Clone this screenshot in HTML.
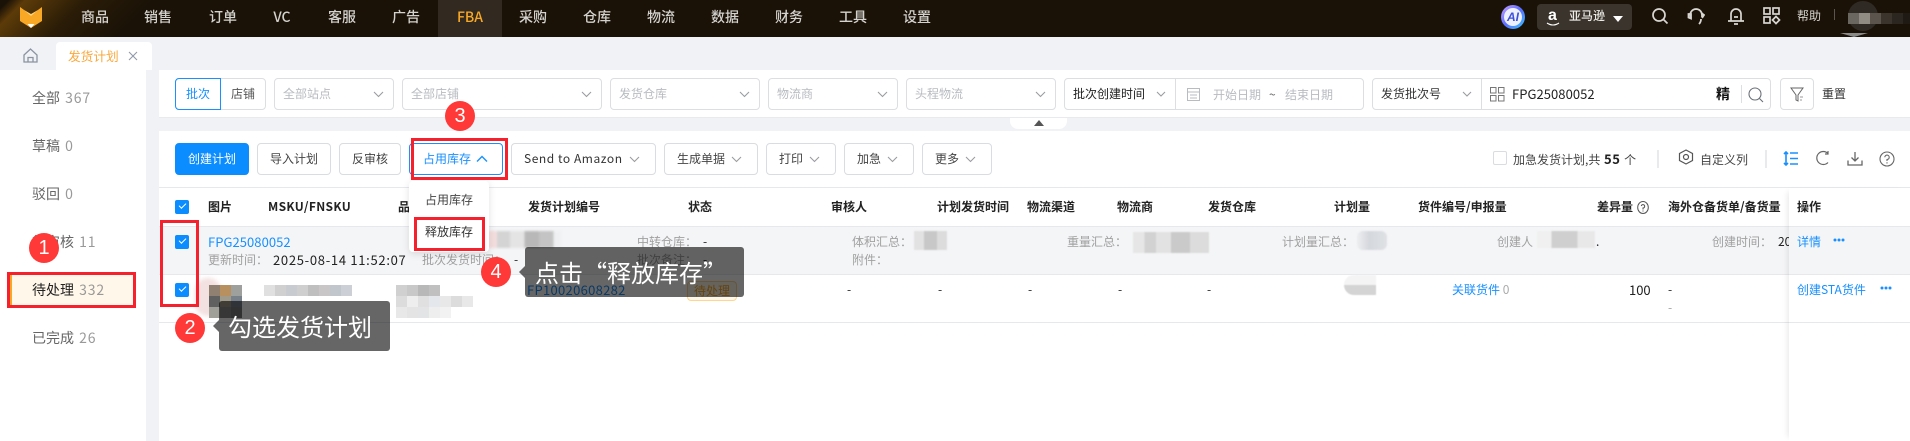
<!DOCTYPE html>
<html lang="zh"><head><meta charset="utf-8"><title>发货计划</title>
<style>
html,body{margin:0;padding:0}
body{width:1910px;height:441px;overflow:hidden;position:relative;background:#f0f2f6;font-family:"Noto Sans CJK SC","Liberation Sans",sans-serif;font-size:12px;color:#333}
div,span,svg{box-sizing:border-box}
.a{position:absolute}
.t{position:absolute;white-space:nowrap;line-height:20px;height:20px}
.nav{color:#d4d2ce;font-size:14px;font-weight:500;transform:translateX(-50%);top:7px}
.box{position:absolute;top:78px;height:32px;border:1px solid #dcdee2;border-radius:4px;background:#fff}
.ph{color:#b8bbc0;top:84px}
.btn{position:absolute;top:143px;height:32px;border:1px solid #d9dce0;border-radius:4px;background:#fff}
.bt{top:149px;color:#444}
.th{top:197px;font-weight:700;color:#222}
.g{color:#a0a0a0}
.l{color:#1890ff}
.d{color:#222}
.n{color:#999;margin-left:2px;letter-spacing:.85px}
.cb{position:absolute;left:175px;width:14px;height:14px;background:#0b8cff;border-radius:2px}
.cb:after{content:"";position:absolute;left:4px;top:3px;width:6px;height:3px;border-left:1.4px solid #fff;border-bottom:1.4px solid #fff;transform:rotate(-45deg)}
.red{position:absolute;border:3px solid #f5222d;z-index:5}
.num{position:absolute;width:30px;height:30px;border-radius:50%;background:#ff3838;color:#fff;font-size:20px;line-height:30px;text-align:center;z-index:7;font-family:"Liberation Sans",sans-serif}
.tip{position:absolute;background:rgba(0,0,0,.6);border-radius:3px;color:#fff;font-size:24px;line-height:50px;height:50px;white-space:nowrap;z-index:6}
.tip:before{content:"";position:absolute;left:-6px;top:19px;border:6px solid transparent;border-left:0;border-right-color:rgba(0,0,0,.6)}
.chev{position:absolute;fill:none;stroke:#9a9ca0;stroke-width:1.1}
.m{position:absolute;display:flex;flex-wrap:wrap;filter:blur(.3px)}
.m i{display:block;width:11px;height:11px}
</style></head><body>

<!-- top nav -->
<div class="a" style="left:0;top:0;width:1910px;height:37px;background:linear-gradient(135deg,#1a1207 0,#1a1207 6px,#5c3b08 18px,#2a1c07 60px,#1a1207 110px,#1a1207 100%)"></div>
<div class="a" style="left:438px;top:0;width:64px;height:37px;background:#322a20"></div>
<svg class="a" style="left:20px;top:7px" width="22" height="22" viewBox="0 0 22 22"><path d="M0 0L11 8 22 0V14L11 21 0 14Z" fill="#f9a825"/><path d="M4 3L11 9 18 3 11 7Z" fill="#ffd47a"/><path d="M7.500 17H14.500L11 21Z" fill="#fff"/></svg>
<span class="t nav" style="left:95px">商品</span><span class="t nav" style="left:158px">销售</span><span class="t nav" style="left:223px">订单</span><span class="t nav" style="left:282px">VC</span><span class="t nav" style="left:342px">客服</span><span class="t nav" style="left:406px">广告</span><span class="t nav" style="left:470px;color:#f9a825">FBA</span><span class="t nav" style="left:533px">采购</span><span class="t nav" style="left:597px">仓库</span><span class="t nav" style="left:661px">物流</span><span class="t nav" style="left:725px">数据</span><span class="t nav" style="left:789px">财务</span><span class="t nav" style="left:853px">工具</span><span class="t nav" style="left:917px">设置</span>

<div class="a" style="left:1501px;top:5px;width:24px;height:24px;border-radius:50%;background:linear-gradient(135deg,#c9a0ff,#5a6cff 50%,#39c8ff);padding:3px"><div style="width:18px;height:18px;border-radius:50%;background:#eef0ff;color:#3d4fd8;font:italic bold 12px/18px 'Liberation Sans',sans-serif;text-align:center">AI</div></div>
<div class="a" style="left:1537px;top:4px;width:95px;height:26px;background:#3a342c;border-radius:4px"></div>
<span class="t" style="left:1548px;top:6px;color:#fff;font:bold 16px/20px 'Liberation Sans',sans-serif">a</span>
<svg class="a" style="left:1546px;top:22px" width="15" height="5"><path d="M1 1Q7 5 13 1" fill="none" stroke="#fff" stroke-width="1.1"/></svg>
<span class="t" style="left:1569px;top:6px;color:#eeece8;font-weight:500">亚马逊</span>
<svg class="a" style="left:1613px;top:15px" width="10" height="8"><path d="M0 1H10L5 7Z" fill="#fff"/></svg>
<svg class="a" style="left:1651px;top:7px" width="18" height="18" fill="none" stroke="#d8d6d2" stroke-width="1.7"><circle cx="8" cy="8" r="6"/><path d="M12.500 12.500L16.500 16.500"/></svg>
<svg class="a" style="left:1687px;top:7px" width="18" height="19" fill="none" stroke="#d8d6d2" stroke-width="1.8"><path d="M4 11A6 6 0 0 1 9 2 6 6 0 0 1 15 8V10"/><path d="M1.500 7V10.500L4 11.500V7ZM15 6.500L17 8 15 11"/><path d="M12 17Q14 15 14 12"/></svg>
<svg class="a" style="left:1727px;top:7px" width="18" height="18" fill="none" stroke="#d8d6d2" stroke-width="1.7"><path d="M1 14H17M4 14V7A5 5 0 0 1 14 7V14M7 10H11M7 17H11"/></svg>
<svg class="a" style="left:1763px;top:7px" width="18" height="18" fill="none" stroke="#d8d6d2" stroke-width="1.7"><rect x="1" y="1" width="6" height="6"/><rect x="10" y="1" width="6" height="6"/><rect x="1" y="10" width="6" height="6"/><path d="M13 9.500L16.500 13 13 16.500 9.500 13Z"/></svg>
<span class="t" style="left:1797px;top:6px;color:#d4d2ce">帮助</span>
<div class="a" style="left:1834px;top:9px;width:1px;height:11px;background:#5a554d"></div>
<div class="a" style="left:1848px;top:1px;width:30px;height:30px;border-radius:50%;background:#2f2a24"></div>
<div class="m" style="left:1848px;top:13px;width:66px"><i style="background:#6a6660"></i><i style="background:#908c84"></i><i style="background:#5a544c"></i><i style="background:#3a342c"></i><i style="background:#2c2620"></i><i style="background:#1f1a14"></i></div>
<div class="a" style="left:1840px;top:33px;width:0;height:0;border:14px solid transparent;border-top:4px solid #8a8a88;border-bottom:0"></div>

<!-- tabs -->
<svg class="a" style="left:23px;top:48px" width="15" height="15" fill="none" stroke="#8a94a0" stroke-width="1.3"><path d="M1 7L7.500 1 14 7V14H1ZM5 14V9.500H10V14"/></svg>
<div class="a" style="left:56px;top:42px;width:96px;height:28px;background:#fff;border-radius:4px 4px 0 0"></div>
<span class="t" style="left:68px;top:46px;font-size:12.7px;color:#f9a83c">发货计划</span>
<svg class="a" style="left:128px;top:51px" width="10" height="10" stroke="#8f9aa8" stroke-width="1.1"><path d="M1 1L9 9M9 1L1 9"/></svg>

<!-- sidebar -->
<div class="a" style="left:0;top:70px;width:146px;height:371px;background:#fff"></div>
<div class="a" style="left:9px;top:272px;width:126px;height:36px;background:#fff7ea;border-left:3px solid #f9a825"></div>
<span class="t" style="left:32px;top:88px;font-size:14px;color:#666">全部 <span class="n">367</span></span>
<span class="t" style="left:32px;top:136px;font-size:14px;color:#666">草稿 <span class="n">0</span></span>
<span class="t" style="left:32px;top:184px;font-size:14px;color:#666">驳回 <span class="n">0</span></span>
<span class="t" style="left:32px;top:232px;font-size:14px;color:#666">待审核 <span class="n">11</span></span>
<span class="t" style="left:32px;top:280px;font-size:14px;color:#222">待处理 <span class="n">332</span></span>
<span class="t" style="left:32px;top:328px;font-size:14px;color:#666">已完成 <span class="n">26</span></span>

<!-- filter panel -->
<div class="a" style="left:159px;top:70px;width:1751px;height:48px;background:#fff;border-bottom:1px solid #e8eaee"></div>
<div class="box" style="left:175px;width:91px"></div>
<div class="a" style="left:175px;top:78px;width:46px;height:32px;border:1px solid #1890ff;border-radius:4px 0 0 4px"></div>
<span class="t l" style="left:186px;top:84px">批次</span><span class="t" style="left:231px;top:84px;color:#555">店铺</span>
<div class="box" style="left:274px;width:120px"></div><span class="t ph" style="left:283px">全部站点</span>
<div class="box" style="left:402px;width:200px"></div><span class="t ph" style="left:411px">全部店铺</span>
<div class="box" style="left:610px;width:150px"></div><span class="t ph" style="left:619px">发货仓库</span>
<div class="box" style="left:768px;width:130px"></div><span class="t ph" style="left:777px">物流商</span>
<div class="box" style="left:906px;width:150px"></div><span class="t ph" style="left:915px">头程物流</span>
<svg class="chev" style="left:373px;top:91px" width="11" height="7"><path d="M1 1L5.500 5.500 10 1"/></svg>
<svg class="chev" style="left:581px;top:91px" width="11" height="7"><path d="M1 1L5.500 5.500 10 1"/></svg>
<svg class="chev" style="left:739px;top:91px" width="11" height="7"><path d="M1 1L5.500 5.500 10 1"/></svg>
<svg class="chev" style="left:877px;top:91px" width="11" height="7"><path d="M1 1L5.500 5.500 10 1"/></svg>
<svg class="chev" style="left:1035px;top:91px" width="11" height="7"><path d="M1 1L5.500 5.500 10 1"/></svg>

<div class="box" style="left:1064px;width:300px"></div>
<div class="a" style="left:1175px;top:78px;width:1px;height:32px;background:#dcdee2"></div>
<span class="t" style="left:1073px;top:84px;color:#222">批次创建时间</span>
<svg class="chev" style="left:1156px;top:91px" width="10" height="7"><path d="M1 1L5 5 9 1"/></svg>
<svg class="a" style="left:1187px;top:87px" width="13" height="14" fill="none" stroke="#b8bbc0"><rect x=".5" y="1.500" width="12" height="12"/><path d="M.5 5H12.500M3 8H10M3 11H10"/></svg>
<span class="t ph" style="left:1213px;top:85px">开始日期</span><span class="t" style="left:1269px;top:85px;color:#666">~</span><span class="t ph" style="left:1285px;top:85px">结束日期</span>

<div class="box" style="left:1372px;width:399px"></div>
<div class="a" style="left:1481px;top:78px;width:1px;height:32px;background:#dcdee2"></div>
<span class="t" style="left:1381px;top:84px;color:#333">发货批次号</span>
<svg class="chev" style="left:1462px;top:91px" width="10" height="7"><path d="M1 1L5 5 9 1"/></svg>
<svg class="a" style="left:1490px;top:87px" width="15" height="15" fill="none" stroke="#777"><rect x=".5" y=".5" width="5.500" height="5.500"/><rect x="8.500" y=".5" width="5.500" height="5.500"/><rect x=".5" y="8.500" width="5.500" height="5.500"/><rect x="8.500" y="8.500" width="5.500" height="5.500"/></svg>
<span class="t" style="left:1512px;top:84px;color:#222;font-size:13px;letter-spacing:.05px">FPG25080052</span>
<span class="t" style="left:1716px;top:84px;color:#111;font-size:14px;font-weight:700">精</span>
<div class="a" style="left:1741px;top:85px;width:1px;height:18px;background:#dcdee2"></div>
<svg class="a" style="left:1748px;top:87px" width="16" height="16" fill="none" stroke="#6a7078" stroke-width="1.1"><circle cx="7" cy="7" r="6"/><path d="M11.500 11.500L15 15"/></svg>
<div class="box" style="left:1780px;width:34px"></div>
<svg class="a" style="left:1790px;top:87px" width="15" height="15" fill="none" stroke="#666"><path d="M1 1H13L8 8V14L6 13V8Z"/><path d="M10 10H13M10 13H12" stroke="#999"/></svg>
<span class="t" style="left:1822px;top:84px;color:#333">重置</span>

<div class="a" style="left:1010px;top:118px;width:57px;height:11px;background:#fff;border-radius:0 0 8px 8px"></div>
<svg class="a" style="left:1034px;top:120px" width="10" height="6"><path d="M0 6L5 0 10 6Z" fill="#555"/></svg>

<!-- main panel -->
<div class="a" style="left:159px;top:131px;width:1751px;height:310px;background:#fff"></div>
<div class="btn" style="left:175px;width:74px;background:#0b8cff;border-color:#0b8cff"></div><span class="t bt" style="left:188px;color:#fff">创建计划</span>
<div class="btn" style="left:257px;width:74px"></div><span class="t bt" style="left:270px">导入计划</span>
<div class="btn" style="left:339px;width:62px"></div><span class="t bt" style="left:352px">反审核</span>
<div class="btn" style="left:409px;width:94px;border-color:#1890ff"></div><span class="t bt" style="left:423px;color:#1890ff">占用库存</span>
<svg class="chev" style="left:476px;top:155px;stroke:#1890ff;stroke-width:1.4" width="12" height="8"><path d="M1 6.500L6 1.500 11 6.500"/></svg>
<div class="btn" style="left:511px;width:145px"></div><span class="t bt" style="left:524px;color:#333;letter-spacing:.55px">Send to Amazon</span>
<svg class="chev" style="left:629px;top:156px" width="11" height="7"><path d="M1 1L5.500 5.500 10 1"/></svg>
<div class="btn" style="left:664px;width:94px"></div><span class="t bt" style="left:677px">生成单据</span>
<svg class="chev" style="left:731px;top:156px" width="11" height="7"><path d="M1 1L5.500 5.500 10 1"/></svg>
<div class="btn" style="left:766px;width:70px"></div><span class="t bt" style="left:779px">打印</span>
<svg class="chev" style="left:809px;top:156px" width="11" height="7"><path d="M1 1L5.500 5.500 10 1"/></svg>
<div class="btn" style="left:844px;width:70px"></div><span class="t bt" style="left:857px">加急</span>
<svg class="chev" style="left:887px;top:156px" width="11" height="7"><path d="M1 1L5.500 5.500 10 1"/></svg>
<div class="btn" style="left:922px;width:70px"></div><span class="t bt" style="left:935px">更多</span>
<svg class="chev" style="left:965px;top:156px" width="11" height="7"><path d="M1 1L5.500 5.500 10 1"/></svg>

<div class="a" style="left:1493px;top:151px;width:14px;height:14px;border:1px solid #d9dce0;border-radius:2px"></div>
<span class="t" style="left:1513px;top:149px;color:#444">加急发货计划,共 <b style="color:#222;font-size:13px;letter-spacing:.5px;margin:0 1px">55</b> 个</span>
<div class="a" style="left:1657px;top:150px;width:2px;height:18px;background:#e8eaee"></div>
<svg class="a" style="left:1678px;top:149px" width="16" height="16" fill="none" stroke="#555" stroke-width="1.2"><path d="M8 1L14.500 4.500V11.500L8 15 1.500 11.500V4.500Z"/><circle cx="8" cy="8" r="2.500"/></svg>
<span class="t" style="left:1700px;top:150px;color:#444">自定义列</span>
<div class="a" style="left:1765px;top:150px;width:2px;height:18px;background:#e8eaee"></div>
<svg class="a" style="left:1783px;top:151px" width="16" height="15" fill="none" stroke="#1890ff" stroke-width="1.6"><path d="M3 1V14M1 3L3 1 5 3M1 12L3 14 5 12M7 2H15M7 7.500H15M7 13H15"/></svg>
<svg class="a" style="left:1815px;top:150px" width="15" height="16" fill="none" stroke="#666" stroke-width="1.2"><path d="M13 3.500A6.500 6.500 0 1 0 13 12.500M13 1V4H10"/></svg>
<svg class="a" style="left:1847px;top:151px" width="16" height="15" fill="none" stroke="#666" stroke-width="1.3"><path d="M8 1V10M4.500 6.500L8 10 11.500 6.500M1 9.500V14H15V9.500"/></svg>
<svg class="a" style="left:1879px;top:151px" width="16" height="16" fill="none" stroke="#666" stroke-width="1.1"><circle cx="8" cy="8" r="7"/><path d="M5.800 6.300A2.200 2.200 0 1 1 8 8.500V10M8 11.300V12.500"/></svg>

<!-- table -->
<div class="a" style="left:159px;top:187px;width:1751px;height:1px;background:#e6e8ec"></div>
<div class="a" style="left:159px;top:226px;width:1751px;height:1px;background:#e6e8ec"></div>
<div class="a" style="left:159px;top:227px;width:1751px;height:47px;background:#f4f5f7"></div>
<div class="a" style="left:159px;top:274px;width:1751px;height:1px;background:#e6e8ec"></div>
<div class="a" style="left:159px;top:322px;width:1751px;height:1px;background:#e6e8ec"></div>

<div class="cb" style="top:200px"></div><div class="cb" style="top:235px"></div><div class="cb" style="top:283px"></div>
<span class="t th" style="left:208px">图片</span><span class="t th" style="left:268px;letter-spacing:.35px">MSKU/FNSKU</span><span class="t th" style="left:398px">品</span><span class="t th" style="left:528px">发货计划编号</span><span class="t th" style="left:688px">状态</span><span class="t th" style="left:831px">审核人</span><span class="t th" style="left:937px">计划发货时间</span><span class="t th" style="left:1027px">物流渠道</span><span class="t th" style="left:1117px">物流商</span><span class="t th" style="left:1208px">发货仓库</span><span class="t th" style="left:1334px">计划量</span><span class="t th" style="left:1418px">货件编号/申报量</span><span class="t th" style="left:1597px">差异量</span>
<svg class="a" style="left:1637px;top:201px" width="12" height="13" fill="none" stroke="#555"><ellipse cx="6" cy="6.500" rx="5.300" ry="6"/><path d="M4.300 5A1.700 1.700 0 1 1 6 7V8.500M6 9.500V10.500"/></svg>
<span class="t th" style="left:1668px">海外仓备货单/备货量</span>

<!-- row 1 -->
<span class="t l" style="left:208px;top:232px;font-size:13px;letter-spacing:.05px">FPG25080052</span>
<span class="t g" style="left:208px;top:250px">更新时间：</span><span class="t d" style="left:273px;top:250px;font-size:13px;letter-spacing:.7px">2025-08-14 11:52:07</span>
<span class="t g" style="left:422px;top:250px">批次发货时间：</span><span class="t d" style="left:514px;top:250px">-</span>
<div class="m" style="left:488px;top:231px;width:73px;height:17px;background:linear-gradient(90deg,#f4dddd 0 12%,#d4d4d4 12% 30%,#e4e4e4 30% 50%,#b8b8b8 50% 70%,#c4c4c4 70% 90%,#eef0f2 90%);filter:blur(1px)"></div>
<span class="t g" style="left:637px;top:232px">中转仓库：</span><span class="t d" style="left:703px;top:232px">-</span>
<span class="t g" style="left:637px;top:250px">批次备注：</span><span class="t d" style="left:703px;top:250px">-</span>
<span class="t g" style="left:852px;top:232px">体积汇总：</span><span class="t g" style="left:852px;top:250px">附件：</span>
<div class="m" style="left:914px;top:231px;width:33px;height:19px;background:linear-gradient(90deg,#e2e2e2 0 30%,#c8c8c8 30% 70%,#dcdcdc 70%);filter:blur(.8px)"></div>
<span class="t g" style="left:1067px;top:232px">重量汇总：</span>
<div class="m" style="left:1133px;top:232px;width:76px;height:21px;background:linear-gradient(90deg,#e6e6e6 0 15%,#d2d2d2 15% 30%,#e2e2e2 30% 50%,#cacaca 50% 75%,#dcdcdc 75%);filter:blur(.8px)"></div>
<span class="t g" style="left:1282px;top:232px">计划量汇总：</span>
<div class="m" style="left:1357px;top:231px;width:30px;height:19px;background:linear-gradient(90deg,#eceef0,#d4d8de 40%,#dfe1e4);border-radius:6px;filter:blur(.8px)"></div>
<span class="t g" style="left:1497px;top:232px">创建人</span>
<div class="m" style="left:1537px;top:231px;width:58px;height:17px;background:linear-gradient(90deg,#f0f0f0 0 25%,#cfcfcf 25% 70%,#e8e8e8 70%);filter:blur(.8px)"></div>
<span class="t d" style="left:1596px;top:232px">.</span>
<span class="t g" style="left:1712px;top:232px">创建时间：</span><span class="t d" style="left:1778px;top:232px">20</span>

<!-- row 2 -->
<div class="a" style="left:195px;top:278px;width:26px;height:38px;border-radius:13px;background:#f3e0e0;filter:blur(2px)"></div>
<div class="m" style="left:209px;top:285px;width:33px"><i style="background:#8f8072"></i><i style="background:#b88f5f"></i><i style="background:#9ea09e"></i><i style="background:#606060"></i><i style="background:#a09a8a"></i><i style="background:#78808a"></i><i style="background:#a0a098"></i><i style="background:#8a8a8a"></i><i style="background:#7a7a7a"></i></div>
<div class="m" style="left:264px;top:285px;width:88px"><i style="background:#e0e0e0"></i><i style="background:#d0d0d0"></i><i style="background:#c8ccd0"></i><i style="background:#d0cfcf"></i><i style="background:#c0bfc0"></i><i style="background:#c8c6c6"></i><i style="background:#c0c6cb"></i><i style="background:#ccd0d6"></i></div>
<div class="m" style="left:396px;top:285px;width:77px"><i style="background:#d0d0d0"></i><i style="background:#c8c8c8"></i><i style="background:#b8b8b8"></i><i style="background:#c0c0c0"></i><i style="background:#fff"></i><i style="background:#fff"></i><i style="background:#fff"></i><i style="background:#dcdcdc"></i><i style="background:#eee"></i><i style="background:#e0e0e0"></i><i style="background:#e4e8ec"></i><i style="background:#e8e8e8"></i><i style="background:#dcdcdc"></i><i style="background:#e8e8e8"></i><i style="background:#e8e8e8"></i><i style="background:#e4e4e4"></i><i style="background:#e2e4e6"></i><i style="background:#eee"></i><i style="background:#f2f2f2"></i><i style="background:#fff"></i><i style="background:#fff"></i></div>
<span class="t l" style="left:527px;top:280px;font-size:13px;letter-spacing:.3px">FP10020608282</span>
<div class="a" style="left:687px;top:281px;width:50px;height:20px;border:1px solid #ffd591;border-radius:4px;background:#fff7e6"></div>
<span class="t" style="left:694px;top:281px;color:#f9a825">待处理</span>
<span class="t d" style="left:847px;top:280px">-</span><span class="t d" style="left:938px;top:280px">-</span><span class="t d" style="left:1028px;top:280px">-</span><span class="t d" style="left:1118px;top:280px">-</span><span class="t d" style="left:1207px;top:280px">-</span>
<div class="a" style="left:1344px;top:275px;width:32px;height:20px;background:linear-gradient(180deg,#f4f4f4 0 50%,#d4d4d4 50%);border-radius:10px 0 0 10px;filter:blur(.5px)"></div>
<span class="t l" style="left:1452px;top:280px">关联货件 <span style="color:#aaa">0</span></span>
<span class="t d" style="left:1629px;top:280px;font-size:13px">100</span>
<span class="t d" style="left:1668px;top:280px">-</span><span class="t g" style="left:1668px;top:298px">-</span>

<!-- fixed column -->
<div class="a" style="left:1789px;top:188px;width:121px;height:253px;background:rgba(255,255,255,.001);box-shadow:-5px 0 6px -4px rgba(0,0,0,.1)"></div>
<div class="a" style="left:1789px;top:188px;width:121px;height:38px;background:#fff"></div>
<div class="a" style="left:1789px;top:227px;width:121px;height:47px;background:#f4f5f7"></div>
<div class="a" style="left:1789px;top:275px;width:121px;height:47px;background:#fff"></div>
<div class="a" style="left:1789px;top:323px;width:121px;height:118px;background:#fff"></div>
<span class="t th" style="left:1797px">操作</span>
<span class="t l" style="left:1797px;top:232px">详情</span>
<svg class="a" style="left:1833px;top:238px" width="12" height="4" fill="#1890ff"><circle cx="2" cy="2" r="1.500"/><circle cx="6" cy="2" r="1.500"/><circle cx="10" cy="2" r="1.500"/></svg>
<span class="t l" style="left:1797px;top:280px">创建STA货件</span>
<svg class="a" style="left:1880px;top:286px" width="12" height="4" fill="#1890ff"><circle cx="2" cy="2" r="1.500"/><circle cx="6" cy="2" r="1.500"/><circle cx="10" cy="2" r="1.500"/></svg>

<!-- dropdown -->
<div class="a" style="left:409px;top:181px;width:80px;height:71px;background:#fff;border-radius:4px;box-shadow:0 2px 8px rgba(0,0,0,.12);z-index:3"></div>
<span class="t" style="left:425px;top:190px;color:#444;z-index:4">占用库存</span>
<span class="t" style="left:425px;top:222px;color:#333;z-index:4">释放库存</span>

<!-- annotations -->
<div class="red" style="left:7px;top:272px;width:129px;height:36px"></div>
<div class="red" style="left:411px;top:138px;width:97px;height:42px"></div>
<div class="red" style="left:160px;top:220px;width:39px;height:87px"></div>
<div class="red" style="left:414px;top:217px;width:71px;height:34px"></div>
<div class="num" style="left:29px;top:233px">1</div>
<div class="num" style="left:175px;top:313px">2</div>
<div class="num" style="left:445px;top:101px">3</div>
<div class="num" style="left:481px;top:257px">4</div>
<div class="tip" style="left:219px;top:301px;width:171px;padding-left:9px">勾选发货计划</div>
<div class="tip" style="left:525px;top:247px;width:219px;padding-left:10px">点击“释放库存”</div>
</body></html>
